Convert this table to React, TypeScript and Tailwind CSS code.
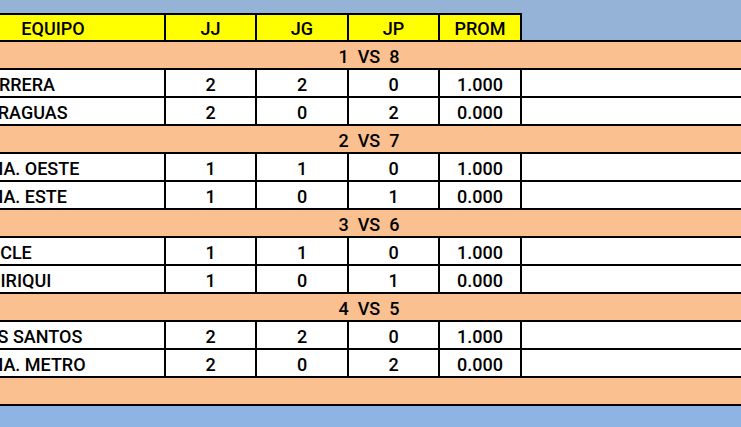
import React from 'react';

interface Team {
  name: string;
  jj: number;
  jg: number;
  jp: number;
  prom: string;
}

interface Series {
  label: string;
  teams: Team[];
}

const series: Series[] = [
  {
    label: '1  VS  8',
    teams: [
      { name: 'HERRERA', jj: 2, jg: 2, jp: 0, prom: '1.000' },
      { name: 'VERAGUAS', jj: 2, jg: 0, jp: 2, prom: '0.000' },
    ],
  },
  {
    label: '2  VS  7',
    teams: [
      { name: 'PMA. OESTE', jj: 1, jg: 1, jp: 0, prom: '1.000' },
      { name: 'PMA. ESTE', jj: 1, jg: 0, jp: 1, prom: '0.000' },
    ],
  },
  {
    label: '3  VS  6',
    teams: [
      { name: 'COCLE', jj: 1, jg: 1, jp: 0, prom: '1.000' },
      { name: 'CHIRIQUI', jj: 1, jg: 0, jp: 1, prom: '0.000' },
    ],
  },
  {
    label: '4  VS  5',
    teams: [
      { name: 'LOS SANTOS', jj: 2, jg: 2, jp: 0, prom: '1.000' },
      { name: 'PMA. METRO', jj: 2, jg: 0, jp: 2, prom: '0.000' },
    ],
  },
];

const SeriesRow: React.FC<{ label: string }> = ({ label }) => (
  <div className="h-[28px] flex items-center justify-center pt-[3px] bg-[#fac090] border-b-2 border-black whitespace-pre">
    {label}
  </div>
);

const TeamRow: React.FC<{ team: Team }> = ({ team }) => (
  <div className="h-[28px] flex bg-white border-b-2 border-black">
    <div className="w-[224px] flex items-center pt-[3px] pl-[34px] border-r-2 border-black whitespace-nowrap">{team.name}</div>
    <div className="w-[91px] flex items-center justify-center pt-[3px] border-r-2 border-black">{team.jj}</div>
    <div className="w-[92px] flex items-center justify-center pt-[3px] border-r-2 border-black">{team.jg}</div>
    <div className="w-[91px] flex items-center justify-center pt-[3px] border-r-2 border-black">{team.jp}</div>
    <div className="w-[82px] flex items-center justify-center pt-[3px] border-r-2 border-black">{team.prom}</div>
    <div className="flex-1" />
  </div>
);

const App: React.FC = () => {
  return (
    <div
      className="w-[741px] h-[427px] overflow-hidden flex flex-col bg-[#95b3d7] text-[18px] font-medium text-black"
      style={{ fontFamily: 'Roboto, "Liberation Sans", sans-serif' }}
    >
      <div className="h-[13px] shrink-0" />
      <div className="w-[854px] ml-[-58px] shrink-0 flex flex-col">
        {/* header */}
        <div className="h-[29px] flex border-b-2 border-black">
          <div className="w-[224px] flex items-center justify-center pt-[2px] bg-[#ffff00] border-t-2 border-r-2 border-black">EQUIPO</div>
          <div className="w-[91px] flex items-center justify-center pt-[2px] bg-[#ffff00] border-t-2 border-r-2 border-black">JJ</div>
          <div className="w-[92px] flex items-center justify-center pt-[2px] bg-[#ffff00] border-t-2 border-r-2 border-black">JG</div>
          <div className="w-[91px] flex items-center justify-center pt-[2px] bg-[#ffff00] border-t-2 border-r-2 border-black">JP</div>
          <div className="w-[82px] flex items-center justify-center pt-[2px] bg-[#ffff00] border-t-2 border-r-2 border-black">PROM</div>
          <div className="flex-1" />
        </div>
        {series.map((s) => (
          <React.Fragment key={s.label}>
            <SeriesRow label={s.label} />
            {s.teams.map((t) => (
              <TeamRow key={t.name} team={t} />
            ))}
          </React.Fragment>
        ))}
        <SeriesRow label="" />
      </div>
      <div className="flex-1 bg-[#8db4e2]" />
    </div>
  );
};

export default App;
